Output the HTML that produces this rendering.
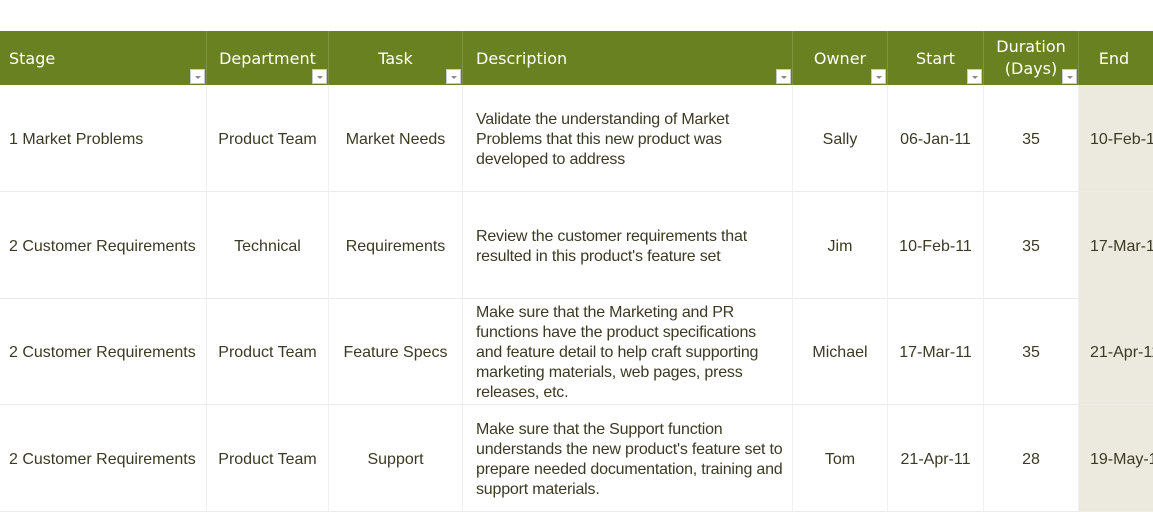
<!DOCTYPE html>
<html><head><style>
body{margin:0;width:1153px;height:495px;overflow:hidden;background:#fff;font-family:"Liberation Sans",Arial,Helvetica,sans-serif;position:relative}
.h{position:absolute;top:31px;height:54px;background:#6a8122;color:#fff;font-family:"DejaVu Sans","Liberation Sans",sans-serif;font-size:16px;border-right:1px solid #7f9440;box-sizing:border-box}
.h span{position:absolute;top:18px;left:0;right:0;text-align:center}
.h .l{text-align:left;left:9px}
.dd{position:absolute;right:1px;bottom:1px;width:15px;height:15px;background:#fff;border:1px solid #c8c8c8;box-sizing:border-box}
.dd:after{content:"";position:absolute;left:4px;top:6px;border-left:3px solid transparent;border-right:3px solid transparent;border-top:3px solid #888}
.c{position:absolute;height:107px;box-sizing:border-box;border-right:1px solid #f0f0f0;border-bottom:1px solid #ececec;color:#3b3a24;font-family:"Liberation Sans",Arial,sans-serif;font-size:16px;display:flex;align-items:center;justify-content:center;text-align:center;line-height:20px;padding-top:4px;white-space:nowrap;overflow:hidden}
.c.l{justify-content:flex-start;text-align:left;padding-left:9px}
.c.d{padding-left:13px;padding-right:0;letter-spacing:-0.2px}
.c.e{background:#ece9de;justify-content:flex-start;padding-left:11px}
</style></head><body>
<div class="h" style="left:0;width:207px"><span class="l">Stage</span><div class="dd"></div></div>
<div class="h" style="left:207px;width:122px"><span>Department</span><div class="dd"></div></div>
<div class="h" style="left:329px;width:134px"><span>Task</span><div class="dd"></div></div>
<div class="h" style="left:463px;width:330px"><span class="l" style="left:13px">Description</span><div class="dd"></div></div>
<div class="h" style="left:793px;width:95px"><span>Owner</span><div class="dd"></div></div>
<div class="h" style="left:888px;width:96px"><span>Start</span><div class="dd"></div></div>
<div class="h" style="left:984px;width:95px"><span style="top:5px;line-height:22px">Duration<br>(Days)</span><div class="dd"></div></div>
<div class="h" style="left:1079px;width:80px;border:none"><span style="left:-10px">End</span></div>

<div id="rows"></div>
<script>
var rows=[
["1 Market Problems","Product Team","Market Needs","Validate the understanding of Market<br>Problems that this new product was<br>developed to address","Sally","06-Jan-11","35","10-Feb-11"],
["2 Customer Requirements","Technical","Requirements","Review the customer requirements that<br>resulted in this product's feature set","Jim","10-Feb-11","35","17-Mar-11"],
["2 Customer Requirements","Product Team","Feature Specs","Make sure that the Marketing and PR<br>functions have the product specifications<br>and feature detail to help craft supporting<br>marketing materials, web pages, press<br>releases, etc.","Michael","17-Mar-11","35","21-Apr-11"],
["2 Customer Requirements","Product Team","Support","Make sure that the Support function<br>understands the new product's feature set to<br>prepare needed documentation, training and<br>support materials.","Tom","21-Apr-11","28","19-May-11"]];
var xs=[0,207,329,463,793,888,984,1079,1160],cls=["l","","","l d","","","","e"],h="";
rows.forEach(function(r,i){var top=85+i*106.5;r.forEach(function(t,j){h+='<div class="c '+cls[j]+'" style="top:'+top+'px;left:'+xs[j]+'px;width:'+(xs[j+1]-xs[j])+'px"><div>'+t+'</div></div>'})});
document.getElementById("rows").innerHTML=h;
</script>
</body></html>
